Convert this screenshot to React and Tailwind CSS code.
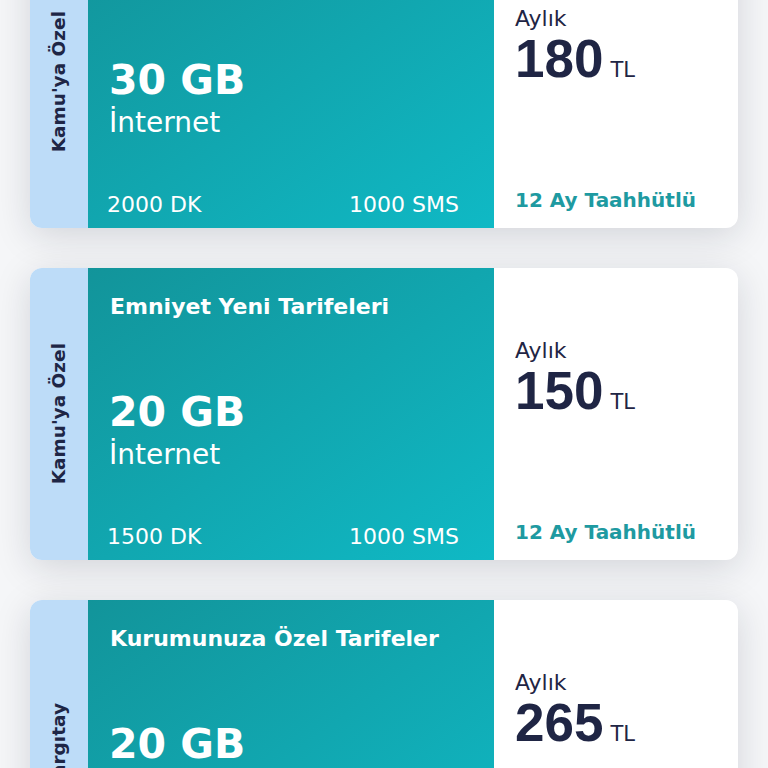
const plans = [
  {
    tag: "Kamu'ya Özel",
    title: "Kamu Tarifeleri",
    gb: "30 GB",
    dk: "2000 DK",
    sms: "1000 SMS",
    price: "180",
  },
  {
    tag: "Kamu'ya Özel",
    title: "Emniyet Yeni Tarifeleri",
    gb: "20 GB",
    dk: "1500 DK",
    sms: "1000 SMS",
    price: "150",
  },
  {
    tag: "Yargıtay",
    title: "Kurumunuza Özel Tarifeler",
    gb: "20 GB",
    dk: "1500 DK",
    sms: "1000 SMS",
    price: "265",
  },
];

function PlanCard({ plan }) {
  return (
    <div className="flex h-[292px] overflow-hidden rounded-xl bg-white shadow-[0_8px_36px_rgba(20,30,50,0.15)]">
      <div className="flex w-[58px] shrink-0 items-center justify-center bg-[#bddcf8]">
        <span className="rotate-180 text-[18.5px] font-bold text-[#1e2646] [writing-mode:vertical-rl]">
          {plan.tag}
        </span>
      </div>
      <div className="flex w-[406px] shrink-0 flex-col bg-gradient-to-br from-[#12949a] to-[#0fb9c5] pb-[10px] pt-[25px] text-white">
        <p className="px-[22px] text-[22px] font-bold leading-[28px]">{plan.title}</p>
        <p className="mt-[68px] px-[21px] text-[41px] font-bold leading-[46px]">{plan.gb}</p>
        <p className="mt-[3px] px-[21px] text-[28px] leading-[34px]">İnternet</p>
        <div className="mt-auto flex items-center justify-between pl-[19px] pr-[35px] text-[22px] leading-[26px]">
          <span>{plan.dk}</span>
          <span>{plan.sms}</span>
        </div>
      </div>
      <div className="flex flex-1 flex-col pb-[15px] pl-[21px] pt-[69px]">
        <p className="text-[22px] leading-[28px] text-[#1f2544]">Aylık</p>
        <p className="mt-[1px] flex items-baseline gap-[7px] leading-[50px] text-[#1f2544]">
          <span className="font-['Liberation_Sans',sans-serif] text-[53px] font-bold">{plan.price}</span>
          <span className="text-[21px]">TL</span>
        </p>
        <p className="mt-auto text-[20px] font-bold leading-[26px] text-[#1e9aa1]">12 Ay Taahhütlü</p>
      </div>
    </div>
  );
}

export default function App() {
  return (
    <div className="h-[768px] overflow-hidden bg-[#f5f6f8] font-['DejaVu_Sans',sans-serif]">
      <div className="-mt-[64px] flex flex-col gap-[40px] pl-[30px] pr-[30px]">
        {plans.map((plan, i) => (
          <PlanCard key={i} plan={plan} />
        ))}
      </div>
    </div>
  );
}
